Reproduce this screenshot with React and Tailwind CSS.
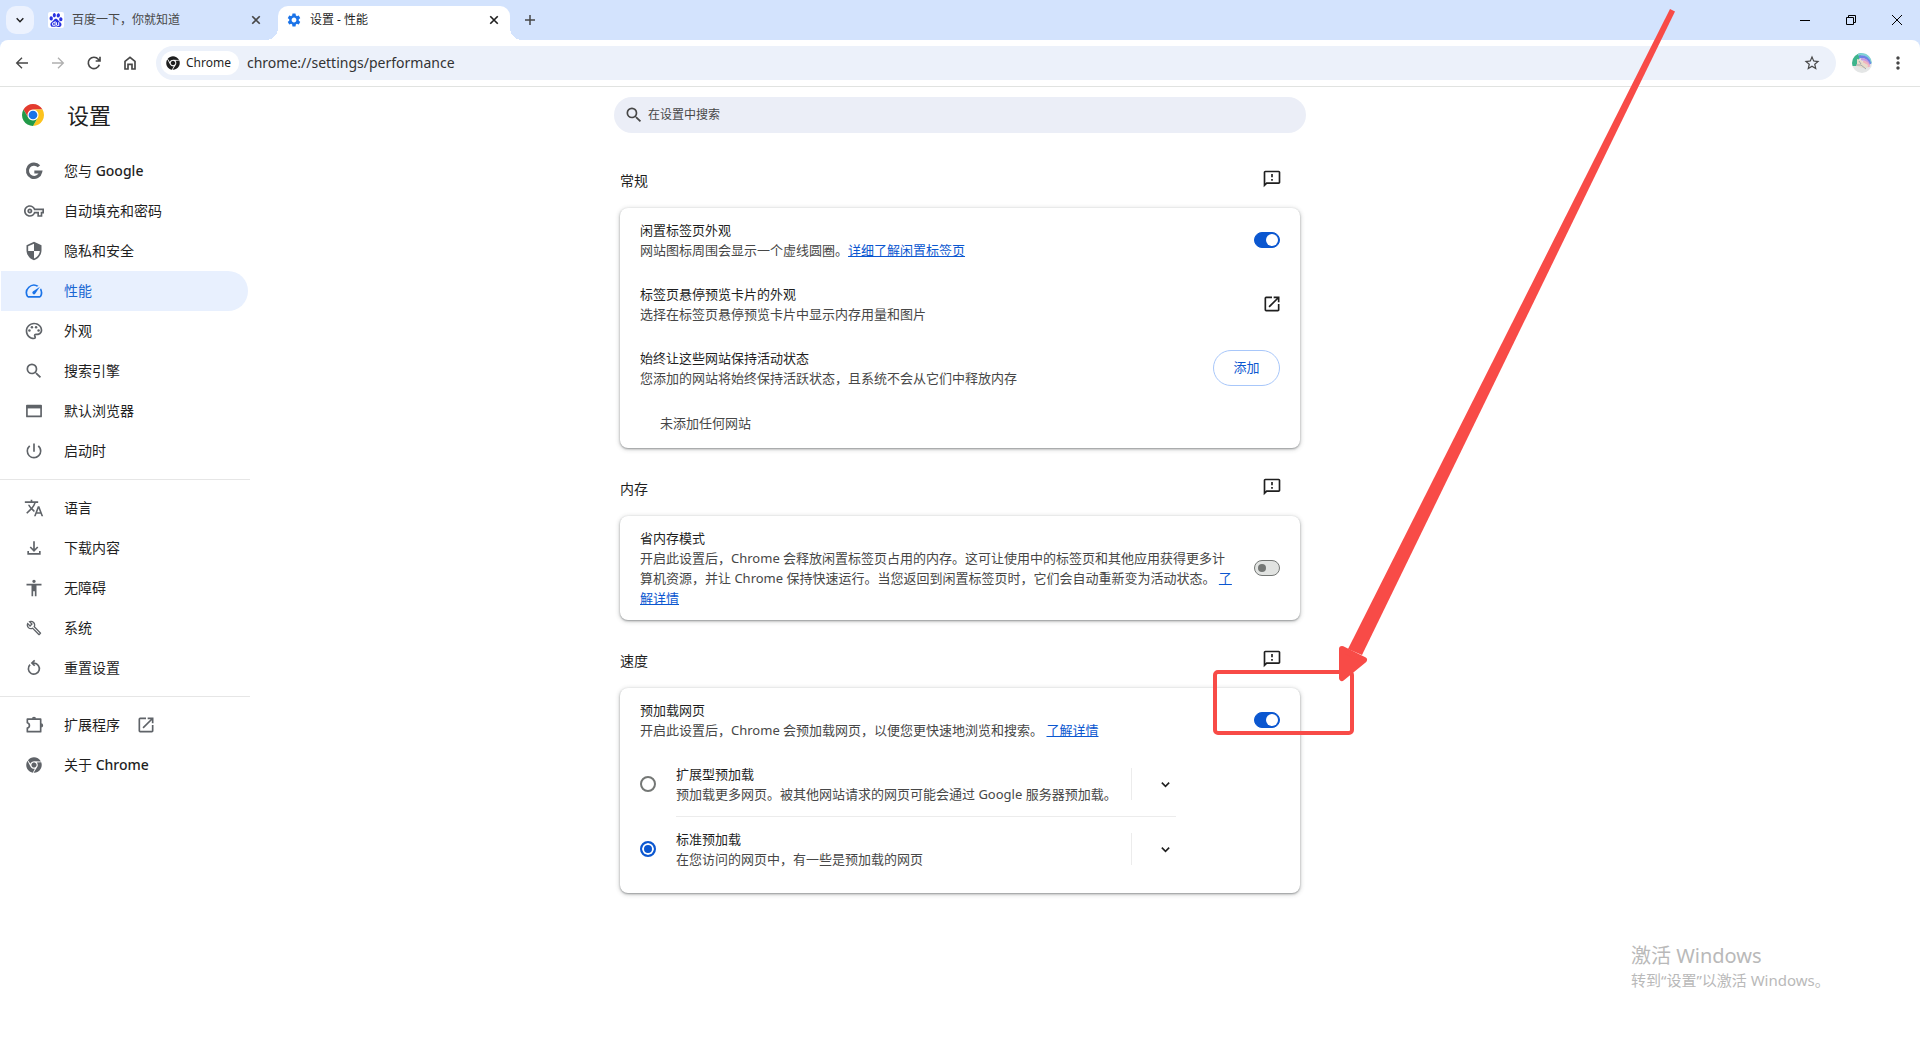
import { useState } from 'react';
import clsx from 'clsx';
import {
  MdAccessibility,
  MdMoreVert,
  MdOpenInNew,
  MdOutlineBuild,
  MdOutlineFeedback,
  MdOutlinePalette,
  MdOutlineSpeed,
  MdOutlineVpnKey,
  MdPowerSettingsNew,
  MdSearch,
  MdSecurity,
  MdSettings,
  MdStarBorder,
  MdTranslate,
} from 'react-icons/md';
import { FaChrome } from 'react-icons/fa';
import { SiBaidu } from 'react-icons/si';

const StrokeIcon = ({ size = 16, width = 2, className, children }) => (
  <svg width={size} height={size} viewBox="0 0 24 24" fill="none" stroke="currentColor" strokeWidth={width} className={className} aria-hidden="true">
    {children}
  </svg>
);

const GoogleIcon = () => (
  <StrokeIcon size={20} width={3.8}>
    <path d="M18 6.300A8 8 0 1 0 20 13.200H12.400" />
  </StrokeIcon>
);

const ChromeIcon = () => (
  <span className="flex size-5 items-center justify-center">
    <FaChrome size={16} />
  </span>
);

const SystemIcon = () => (
  <span className="flex size-5 items-center justify-center">
    <MdOutlineBuild size={16} />
  </span>
);

const WindowIcon = () => (
  <StrokeIcon size={20}>
    <path d="M3.500 5.500h17v13h-17z" strokeLinejoin="round" />
    <path d="M3 7.200h18" width={3} strokeWidth="3.400" />
  </StrokeIcon>
);

const DownloadIcon = () => (
  <StrokeIcon size={20}>
    <path d="M12 4v11M7.500 10.800l4.500 4.500 4.500-4.500M5 15.500V19h14v-3.500" />
  </StrokeIcon>
);

const ResetIcon = () => (
  <StrokeIcon size={20}>
    <path d="M7.300 8A6.600 6.600 0 1 0 12 6.200H10" />
    <path d="M12.800 2.800L9.500 6l3.300 3.300" />
  </StrokeIcon>
);

const ExtensionIcon = () => (
  <StrokeIcon size={20}>
    <path d="M4 5h16v15H4v-4.300a3.300 3.300 0 0 0 0-6.400z" strokeLinejoin="round" />
    <path d="M9.500 4.500a2.500 2.500 0 0 1 5 0zM20.500 10a2.500 2.500 0 0 1 0 5z" fill="currentColor" stroke="none" />
  </StrokeIcon>
);

const ChevronIcon = ({ size = 16 }) => (
  <StrokeIcon size={size} width={3.5}>
    <path d="M4 8l8 8 8-8" />
  </StrokeIcon>
);

const CloseIcon = () => (
  <StrokeIcon size={10} width={4}>
    <path d="M3 3l18 18M21 3L3 21" />
  </StrokeIcon>
);

const ChromeLogo = () => (
  <svg width="22" height="22" viewBox="0 0 48 48" aria-hidden="true">
    <circle cx="24" cy="24" r="12" fill="#fff" />
    <path fill="#e33b2e" d="M24 12h20.780a24 24 0 0 0-41.560 0L13.610 30l.01 0A12 12 0 0 1 24 12z" />
    <path fill="#fcc31e" d="M34.390 30L24 48A24 24 0 0 0 44.780 12H24a12 12 0 0 1 10.390 18z" />
    <path fill="#229a48" d="M13.610 30L3.220 12A24 24 0 0 0 24 48l10.390-18a12 12 0 0 1-20.780 0z" />
    <circle cx="24" cy="24" r="9.500" fill="#1a73e8" />
  </svg>
);

const Avatar = () => (
  <svg width="20" height="20" viewBox="0 0 20 20" aria-hidden="true">
    <defs>
      <clipPath id="avatar">
        <circle cx="10" cy="10" r="10" />
      </clipPath>
    </defs>
    <g clipPath="url(#avatar)">
      <rect width="20" height="20" fill="#e4e6e6" />
      <path d="M0 0h10L4 13H0z" fill="#3db58c" />
      <g fill="none" strokeWidth="2.600">
        <path d="M6 1.500c8-2 12 3 13 9" stroke="#7fd3d6" />
        <path d="M7 4c6-1.500 10 2 11 7" stroke="#6d83e6" />
        <path d="M9 6.500c4-1 7 2 8 6" stroke="#c59ae0" />
        <path d="M11 9c3 0 5 2 6 5" stroke="#efb4c0" />
      </g>
      <path d="M5 6l4 1 3 3 4 2-1 3-5 0-5-2z" fill="#e8dccb" />
      <path d="M4 12l5 0 5 4M7 8l2 3" stroke="#a3a9ad" fill="none" />
    </g>
  </svg>
);

const navGroups = [
  [
    { name: '您与', brand: 'Google', icon: GoogleIcon },
    { name: '自动填充和密码', icon: MdOutlineVpnKey },
    { name: '隐私和安全', icon: MdSecurity },
    { name: '性能', icon: MdOutlineSpeed, active: true },
    { name: '外观', icon: MdOutlinePalette },
    { name: '搜索引擎', icon: MdSearch },
    { name: '默认浏览器', icon: WindowIcon },
    { name: '启动时', icon: MdPowerSettingsNew },
  ],
  [
    { name: '语言', icon: MdTranslate },
    { name: '下载内容', icon: DownloadIcon },
    { name: '无障碍', icon: MdAccessibility },
    { name: '系统', icon: SystemIcon },
    { name: '重置设置', icon: ResetIcon },
  ],
  [
    { name: '扩展程序', icon: ExtensionIcon, external: true },
    { name: '关于', brand: 'Chrome', icon: ChromeIcon },
  ],
];

const preloadOptions = [
  { id: 'extended', title: '扩展型预加载', text: '预加载更多网页。被其他网站请求的网页可能会通过 Google 服务器预加载。' },
  { id: 'standard', title: '标准预加载', text: '在您访问的网页中，有一些是预加载的网页' },
];

const TabStrip = () => (
  <div className="flex h-10 items-end bg-[#d3e3fd] pl-1.5">
    <button aria-label="搜索标签页" className="mb-1.5 mr-1.5 flex size-7 items-center justify-center rounded-[10px] bg-[#ecf2fe] text-[#1f1f1f]">
      <ChevronIcon size={10} />
    </button>

    <div className="flex h-[34px] w-[238px] items-center gap-2 pb-1.5 pl-2 pr-3.5 text-xs text-[#474747]">
      <span className="flex size-4 items-center justify-center rounded-xs bg-white text-[#2932e1]">
        <SiBaidu size={14} />
      </span>
      <span className="flex-1 truncate">百度一下，你就知道</span>
      <button aria-label="关闭" className="flex size-4 items-center justify-center">
        <CloseIcon />
      </button>
    </div>

    <div className="relative flex h-[34px] w-[232px] items-center gap-2 rounded-t-[10px] bg-white px-2 pb-1.5 text-xs text-[#1f1f1f]">
      <span className="absolute -left-3 bottom-0 size-3 bg-[radial-gradient(circle_at_0_0,transparent_12px,#fff_12px)]" />
      <span className="absolute -right-3 bottom-0 size-3 bg-[radial-gradient(circle_at_100%_0,transparent_12px,#fff_12px)]" />
      <MdSettings size={16} className="text-[#1a73e8]" />
      <span className="flex-1 truncate">设置 - 性能</span>
      <button aria-label="关闭" className="flex size-4 items-center justify-center">
        <CloseIcon />
      </button>
    </div>

    <button aria-label="新标签页" className="mb-1.5 ml-1.5 flex size-7 items-center justify-center text-[#474747]">
      <StrokeIcon size={12} width={3}>
        <path d="M12 2v20M2 12h20" />
      </StrokeIcon>
    </button>

    <div className="ml-auto flex self-stretch text-black">
      <button aria-label="最小化" className="flex w-[46px] items-center justify-center">
        <svg width="10" height="10" stroke="currentColor">
          <path d="M0 5.500h10" />
        </svg>
      </button>
      <button aria-label="向下还原" className="flex w-[46px] items-center justify-center">
        <svg width="10" height="10" fill="none" stroke="currentColor">
          <path d="M.5 2.500h7v7h-7zM2.500 2.500v-2h7v7h-2" />
        </svg>
      </button>
      <button aria-label="关闭窗口" className="flex w-[46px] items-center justify-center">
        <svg width="10" height="10" stroke="currentColor">
          <path d="M0 0l10 10M10 0L0 10" />
        </svg>
      </button>
    </div>
  </div>
);

const ToolButton = ({ label, className, children }) => (
  <button aria-label={label} className={clsx('flex size-7 shrink-0 items-center justify-center', className)}>
    {children}
  </button>
);

const Toolbar = () => (
  <div className="bg-[#d3e3fd]">
    <div className="flex h-[47px] items-center gap-2 rounded-t-lg border-b border-[#e1e3e1] bg-white px-2 text-[#474747]">
      <ToolButton label="后退">
        <StrokeIcon>
          <path d="M21 12H4M12 4l-8 8 8 8" />
        </StrokeIcon>
      </ToolButton>
      <ToolButton label="前进" className="text-[#b0b0b0]">
        <StrokeIcon>
          <path d="M3 12h17M12 4l8 8-8 8" />
        </StrokeIcon>
      </ToolButton>
      <ToolButton label="重新加载">
        <StrokeIcon width={2.5}>
          <path d="M20 14.500A8.500 8.500 0 1 1 18.500 6.500L21 9M21 2.500V9h-6.500" />
        </StrokeIcon>
      </ToolButton>
      <ToolButton label="首页">
        <StrokeIcon width={2.5}>
          <path d="M4.500 9.500L12 3.500l7.500 6V21H15v-7H9v7H4.500z" />
        </StrokeIcon>
      </ToolButton>

      <div className="ml-1 mr-1 flex h-[34px] flex-1 items-center rounded-full bg-[#ecf1fa] pl-[5px] pr-2.5">
        <button className="flex h-6 items-center gap-1.5 rounded-full bg-white pl-[5px] pr-2 text-xs text-[#1f1f1f]">
          <FaChrome size={14} />
          Chrome
        </button>
        <input
          aria-label="地址栏"
          defaultValue="chrome://settings/performance"
          className="ml-2 min-w-0 flex-1 bg-transparent text-sm text-[#333] outline-none"
        />
        <ToolButton label="为此标签页添加书签">
          <MdStarBorder size={18} />
        </ToolButton>
      </div>

      <ToolButton label="个人资料">
        <Avatar />
      </ToolButton>
      <ToolButton label="更多">
        <MdMoreVert size={20} />
      </ToolButton>
    </div>
  </div>
);

const Sidebar = () => (
  <aside className="w-[250px]">
    <div className="flex h-14 items-center gap-[23px] pl-[22px]">
      <ChromeLogo />
      <h1 className="text-[22px] leading-7 text-[#1f1f1f]">设置</h1>
    </div>

    <nav className="pt-2">
      {navGroups.map((items, index) => (
        <ul key={index} className={clsx(index > 0 && 'mt-2 border-t border-[#e6e6e6] pt-2')}>
          {items.map(({ name, brand, icon: Icon, active, external }) => (
            <li key={name}>
              <a
                href="#"
                className={clsx(
                  'ml-px mr-0.5 flex h-10 items-center gap-5 rounded-r-full pl-[23px] text-sm',
                  active ? 'bg-[#e8f0fe] text-[#1967d2]' : 'text-[#1f1f1f]'
                )}
              >
                <span className={active ? 'text-[#1a73e8]' : 'text-[#5f6368]'}>
                  <Icon size={20} />
                </span>
                <span>
                  {name}
                  {brand && <span className="font-medium"> {brand}</span>}
                </span>
                {external && <MdOpenInNew size={20} className="-ml-1 text-[#5f6368]" />}
              </a>
            </li>
          ))}
        </ul>
      ))}
    </nav>
  </aside>
);

const Section = ({ title, children }) => (
  <section className="px-1.5">
    <div className="flex h-[68px] items-start justify-between pr-[18px] pt-[29px]">
      <h2 className="text-sm leading-6 text-[#1f1f1f]">{title}</h2>
      <button aria-label="发送反馈" className="text-[#1f1f1f]">
        <MdOutlineFeedback size={20} />
      </button>
    </div>
    <div className="rounded-lg bg-white shadow-[0_1px_2px_rgba(60,64,67,0.45),0_1px_4px_1px_rgba(60,64,67,0.2)]">{children}</div>
  </section>
);

const Row = ({ title, text, link, htmlFor, children }) => (
  <div className="flex items-center justify-between px-5 py-3">
    <div className="max-w-[594px] text-[13px] leading-5">
      <label htmlFor={htmlFor} className="block text-[#1f1f1f]">{title}</label>
      <p className="text-[#474747]">
        {text}
        {link && (
          <a href="#" className="text-[#0b57d0] underline">{link}</a>
        )}
      </p>
    </div>
    {children}
  </div>
);

const Toggle = ({ id, defaultChecked }) => (
  <input
    id={id}
    type="checkbox"
    role="switch"
    defaultChecked={defaultChecked}
    className="relative h-4 w-[26px] shrink-0 appearance-none rounded-full border border-[#747775] bg-[#e1e3e1] before:absolute before:left-[3px] before:top-[3px] before:size-2 before:rounded-full before:bg-[#747775] checked:border-[#0b57d0] checked:bg-[#0b57d0] checked:before:left-[11px] checked:before:top-px checked:before:size-3 checked:before:bg-white"
  />
);

const Preloading = () => {
  const [selected, setSelected] = useState('standard');

  return (
    <div className="pb-3 pl-5 pr-[124px]">
      {preloadOptions.map(({ id, title, text }, index) => (
        <div key={id} className="flex items-center gap-5">
          <input
            id={id}
            type="radio"
            name="preloading"
            checked={selected === id}
            onChange={() => setSelected(id)}
            className="size-4 shrink-0 appearance-none rounded-full border-2 border-[#747775] checked:border-[#0b57d0] checked:bg-[#0b57d0] checked:shadow-[inset_0_0_0_2px_#fff]"
          />
          <div className={clsx('flex flex-1 items-center py-3', index > 0 && 'border-t border-[#ececec]')}>
            <label htmlFor={id} className="flex-1 text-[13px] leading-5">
              <span className="block text-[#1f1f1f]">{title}</span>
              <span className="block text-[#474747]">{text}</span>
            </label>
            <button aria-label="展开" className="flex h-8 w-[45px] items-center justify-end border-l border-[#ececec] pr-[5px] text-[#1f1f1f]">
              <ChevronIcon size={11} />
            </button>
          </div>
        </div>
      ))}
    </div>
  );
};

const Settings = () => (
  <main className="pt-2.5">
    <div className="flex h-9 items-center rounded-full bg-[#ebeef7] px-2.5 text-[#474747]">
      <MdSearch size={20} />
      <input
        type="search"
        aria-label="在设置中搜索"
        placeholder="在设置中搜索"
        className="ml-1 flex-1 bg-transparent text-xs outline-none placeholder:text-[#474747]"
      />
    </div>

    <div className="pt-[7px]">
      <Section title="常规">
        <Row title="闲置标签页外观" text="网站图标周围会显示一个虚线圆圈。" link="详细了解闲置标签页" htmlFor="inactive-tabs">
          <Toggle id="inactive-tabs" defaultChecked />
        </Row>
        <Row title="标签页悬停预览卡片的外观" text="选择在标签页悬停预览卡片中显示内存用量和图片" htmlFor="hover-card">
          <button id="hover-card" className="-mr-0.5 text-[#1f1f1f]">
            <MdOpenInNew size={20} />
          </button>
        </Row>
        <div className="flex h-16 items-center justify-between px-5">
          <div className="text-[13px] leading-5">
            <p className="text-[#1f1f1f]">始终让这些网站保持活动状态</p>
            <p className="text-[#474747]">您添加的网站将始终保持活跃状态，且系统不会从它们中释放内存</p>
          </div>
          <button className="h-9 w-[67px] rounded-full border border-[#a8c7fa] text-[13px] text-[#0b57d0]">添加</button>
        </div>
        <p className="flex h-12 items-center px-10 text-[13px] text-[#474747]">未添加任何网站</p>
      </Section>

      <Section title="内存">
        <Row
          title="省内存模式"
          text="开启此设置后，Chrome 会释放闲置标签页占用的内存。这可让使用中的标签页和其他应用获得更多计算机资源，并让 Chrome 保持快速运行。当您返回到闲置标签页时，它们会自动重新变为活动状态。 "
          link="了解详情"
          htmlFor="memory-saver"
        >
          <Toggle id="memory-saver" />
        </Row>
      </Section>

      <Section title="速度">
        <Row title="预加载网页" text="开启此设置后，Chrome 会预加载网页，以便您更快速地浏览和搜索。 " link="了解详情" htmlFor="preload">
          <Toggle id="preload" defaultChecked />
        </Row>
        <Preloading />
      </Section>
    </div>
  </main>
);

// Red marker pointing at the preload switch
const Annotation = () => (
  <svg width="464" height="740" className="pointer-events-none absolute left-1/2 top-0 ml-[253px]" fill="#f84b47" aria-hidden="true">
    <rect x="2" y="672" width="137" height="61" rx="3" fill="none" stroke="#f84b47" strokeWidth="4" />
    <path d="M457 9l5 2.500L149 655l-14-6z" />
    <path d="M129 649l22 11-22 18z" stroke="#f84b47" strokeWidth="6" strokeLinejoin="round" />
  </svg>
);

const App = () => (
  <div className="relative min-h-screen bg-white font-['Noto_Sans','Noto_Sans_CJK_SC',sans-serif]">
    <header>
      <TabStrip />
      <Toolbar />
    </header>

    <div className="grid grid-cols-[1fr_692px_1fr]">
      <Sidebar />
      <Settings />
    </div>

    <Annotation />

    <div className="pointer-events-none absolute bottom-[50px] right-[79px] w-[210px] whitespace-nowrap text-[#b9b9b9]">
      <p className="text-xl leading-7">激活 Windows</p>
      <p className="text-[15px] leading-5">转到“设置”以激活 Windows。</p>
    </div>
  </div>
);

export default App;
